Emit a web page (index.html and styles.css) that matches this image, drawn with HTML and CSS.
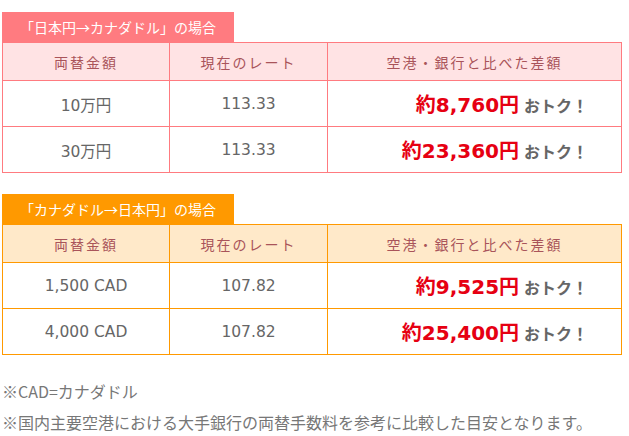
FILE: index.html
```html
<!DOCTYPE html>
<html lang="ja">
<head>
<meta charset="utf-8">
<link rel="stylesheet" href="styles.css">
</head>
<body>
<div class="page">
  <section class="block pink">
    <div class="tab">「日本円→カナダドル」の場合</div>
    <table class="rate">
      <thead>
        <tr><th class="c1">両替金額</th><th class="c2">現在のレート</th><th class="c3">空港・銀行と比べた差額</th></tr>
      </thead>
      <tbody>
        <tr><td>10万円</td><td>113.33</td><td class="save"><span class="amt">約8,760円</span> <span class="otoku">おトク！</span></td></tr>
        <tr><td>30万円</td><td>113.33</td><td class="save"><span class="amt">約23,360円</span> <span class="otoku">おトク！</span></td></tr>
      </tbody>
    </table>
  </section>
  <section class="block orange">
    <div class="tab">「カナダドル→日本円」の場合</div>
    <table class="rate">
      <thead>
        <tr><th class="c1">両替金額</th><th class="c2">現在のレート</th><th class="c3">空港・銀行と比べた差額</th></tr>
      </thead>
      <tbody>
        <tr><td>1,500 CAD</td><td>107.82</td><td class="save"><span class="amt">約9,525円</span> <span class="otoku">おトク！</span></td></tr>
        <tr><td>4,000 CAD</td><td>107.82</td><td class="save"><span class="amt">約25,400円</span> <span class="otoku">おトク！</span></td></tr>
      </tbody>
    </table>
  </section>
  <div class="notes">
    <p>※CAD=カナダドル</p>
    <p>※国内主要空港における大手銀行の両替手数料を参考に比較した目安となります。</p>
  </div>
</div>
</body>
</html>
```
FILE: styles.css
```css
html, body {
  margin: 0;
  padding: 0;
  background: #fff;
}
body {
  font-family: "DejaVu Sans", "Noto Sans CJK JP", sans-serif;
  color: #666;
}
.page {
  padding: 12px 8px 0 2px;
}
.block {
  margin-bottom: 21px;
}
.tab {
  display: inline-block;
  height: 30px;
  line-height: 30px;
  padding: 0 18px;
  color: #fff;
  font-family: "Noto Sans CJK JP", sans-serif;
  font-size: 14px;
  vertical-align: top;
}
.pink .tab { background: #ff7b80; }
.orange .tab { background: #ff9900; }
.rate {
  width: 620px;
  border-collapse: collapse;
  table-layout: fixed;
}
.rate th, .rate td {
  border: 1px solid;
  padding: 0;
  text-align: center;
}
.pink .rate th, .pink .rate td { border-color: #ff7b80; }
.orange .rate th, .orange .rate td { border-color: #ff9900; }
.rate th {
  height: 37px;
  font-family: "Noto Sans CJK JP", sans-serif;
  font-weight: normal;
  font-size: 14px;
  letter-spacing: 2px;
  color: #a9545a;
}
.pink .rate th { background: #ffe3e4; }
.orange .rate th { background: #ffe9c9; }
.c1 { width: 166px; }
.c2 { width: 157px; }
.rate td {
  height: 45px;
  font-size: 15.5px;
  color: #666;
}
.rate td.save {
  text-align: right;
  padding-right: 33px;
}
.amt {
  font-size: 20px;
  font-weight: bold;
  color: #e60012;
}
.otoku {
  font-family: "Noto Sans CJK JP", sans-serif;
  font-size: 16px;
  font-weight: bold;
  color: #666;
}
.notes {
  margin-top: 20px;
  font-family: "Noto Sans CJK JP", sans-serif;
  font-size: 16px;
  color: #777;
}
.notes p {
  margin: 0;
  line-height: 31px;
}
```
